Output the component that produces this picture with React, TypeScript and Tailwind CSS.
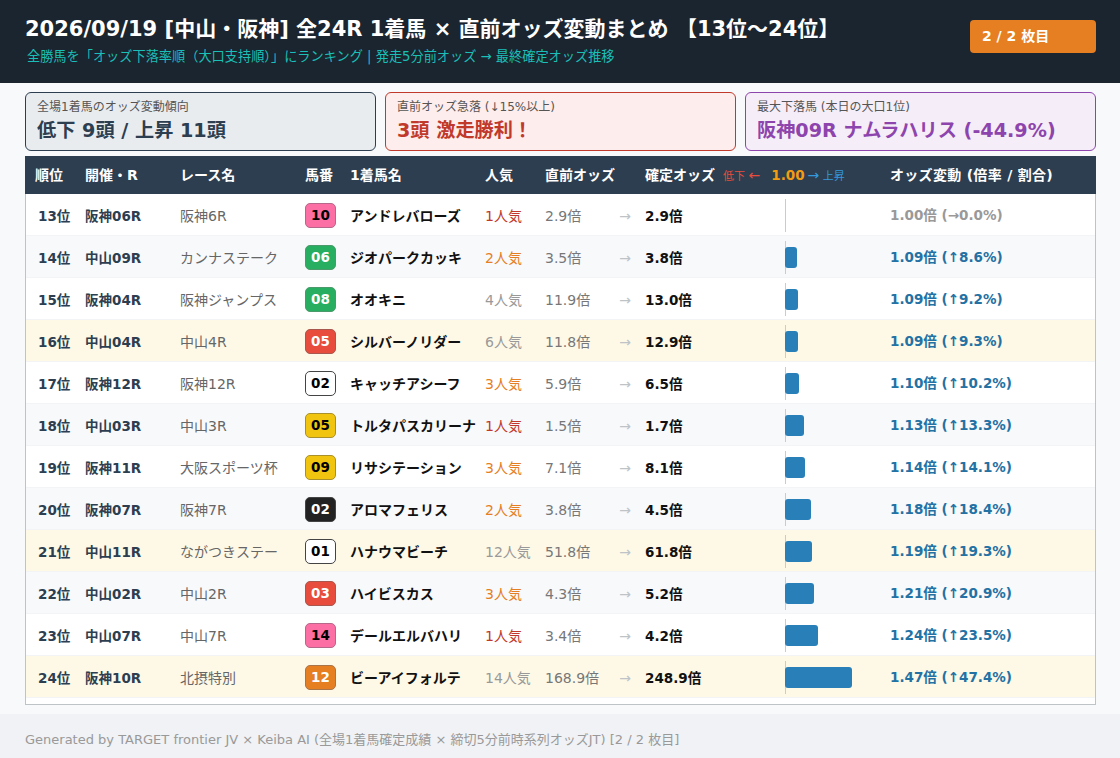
const rows = [
  { rank: "13位", r: "阪神06R", race: "阪神6R", no: "10", w: "p", name: "アンドレバローズ", pop: "1人気", before: "2.9倍", after: "2.9倍", pct: 0, label: "1.00倍 (→0.0%)" },
  { rank: "14位", r: "中山09R", race: "カンナステーク", no: "06", w: "g", name: "ジオパークカッキ", pop: "2人気", before: "3.5倍", after: "3.8倍", pct: 8.6, label: "1.09倍 (↑8.6%)" },
  { rank: "15位", r: "阪神04R", race: "阪神ジャンプス", no: "08", w: "g", name: "オオキニ", pop: "4人気", before: "11.9倍", after: "13.0倍", pct: 9.2, label: "1.09倍 (↑9.2%)" },
  { rank: "16位", r: "中山04R", race: "中山4R", no: "05", w: "r", name: "シルバーノリダー", pop: "6人気", before: "11.8倍", after: "12.9倍", pct: 9.3, label: "1.09倍 (↑9.3%)", hot: true },
  { rank: "17位", r: "阪神12R", race: "阪神12R", no: "02", w: "w", name: "キャッチアシーフ", pop: "3人気", before: "5.9倍", after: "6.5倍", pct: 10.2, label: "1.10倍 (↑10.2%)" },
  { rank: "18位", r: "中山03R", race: "中山3R", no: "05", w: "y", name: "トルタパスカリーナ", pop: "1人気", before: "1.5倍", after: "1.7倍", pct: 13.3, label: "1.13倍 (↑13.3%)" },
  { rank: "19位", r: "阪神11R", race: "大阪スポーツ杯", no: "09", w: "y", name: "リサシテーション", pop: "3人気", before: "7.1倍", after: "8.1倍", pct: 14.1, label: "1.14倍 (↑14.1%)" },
  { rank: "20位", r: "阪神07R", race: "阪神7R", no: "02", w: "b", name: "アロマフェリス", pop: "2人気", before: "3.8倍", after: "4.5倍", pct: 18.4, label: "1.18倍 (↑18.4%)" },
  { rank: "21位", r: "中山11R", race: "ながつきステー", no: "01", w: "w", name: "ハナウマビーチ", pop: "12人気", before: "51.8倍", after: "61.8倍", pct: 19.3, label: "1.19倍 (↑19.3%)", hot: true },
  { rank: "22位", r: "中山02R", race: "中山2R", no: "03", w: "r", name: "ハイビスカス", pop: "3人気", before: "4.3倍", after: "5.2倍", pct: 20.9, label: "1.21倍 (↑20.9%)" },
  { rank: "23位", r: "中山07R", race: "中山7R", no: "14", w: "p", name: "デールエルバハリ", pop: "1人気", before: "3.4倍", after: "4.2倍", pct: 23.5, label: "1.24倍 (↑23.5%)" },
  { rank: "24位", r: "阪神10R", race: "北摂特別", no: "12", w: "o", name: "ビーアイフォルテ", pop: "14人気", before: "168.9倍", after: "248.9倍", pct: 47.4, label: "1.47倍 (↑47.4%)", hot: true },
];

const wakuClass: Record<string, string> = {
  p: "bg-[#fb6fa5] text-black border-[#b5688a]",
  g: "bg-[#27ae60] text-white border-[#4c9a6c]",
  r: "bg-[#e74c3c] text-white border-[#a8584e]",
  w: "bg-white text-black border-[#444444]",
  y: "bg-[#f1c40f] text-black border-[#a8902c]",
  b: "bg-[#222222] text-white border-[#444444]",
  o: "bg-[#e67e22] text-white border-[#a8754a]",
};

const popClass = (pop: string) => {
  const n = parseInt(pop);
  if (n === 1) return "text-[#c0392b]";
  if (n <= 3) return "text-[#e67e22]";
  return "text-[#999999]";
};

const cols = "grid grid-cols-[50px_95px_125px_45px_135px_60px_100px_140px_105px_1fr] items-center";

export default function App() {
  return (
    <div className="w-[1120px] h-[758px] overflow-hidden bg-[#f8f9fb] flex flex-col font-['DejaVu_Sans','Noto_Sans_CJK_JP',sans-serif]">
      <header className="h-[83px] shrink-0 bg-[#1a252f] pl-[25px] pr-[24px] flex justify-between items-start">
        <div className="pt-[14px]">
          <h1 className="text-[21px] leading-[30px] font-bold text-white whitespace-nowrap">2026/09/19 [中山・阪神] 全24R 1着馬 × 直前オッズ変動まとめ 【13位～24位】</h1>
          <p className="text-[13.2px] leading-[18px] mt-[4px] pl-[2px] text-[#1abfb8] whitespace-nowrap">全勝馬を「オッズ下落率順（大口支持順）」にランキング | 発走5分前オッズ → 最終確定オッズ推移</p>
        </div>
        <div className="mt-[20px] w-[126px] h-[33px] rounded-[4px] bg-[#e67e22] text-white text-[14px] font-bold flex items-center pl-[12px]">2 / 2 枚目</div>
      </header>

      <main className="flex-1 pl-[25px] pr-[24px] pt-[9px]">
        <div className="grid grid-cols-3 gap-[9px]">
          <div className="h-[59px] rounded-[6px] border border-[#2c3e50] bg-[#e9ecef] pl-[11px] pt-[5px]">
            <div className="text-[12px] leading-[18px] text-[#555555]">全場1着馬のオッズ変動傾向</div>
            <div className="text-[19.2px] leading-[28px] mt-[1px] font-bold text-[#2c3e50]">低下 9頭 / 上昇 11頭</div>
          </div>
          <div className="h-[59px] rounded-[6px] border border-[#c0392b] bg-[#fdedec] pl-[11px] pt-[5px]">
            <div className="text-[12px] leading-[18px] text-[#555555]">直前オッズ急落 (↓15%以上)</div>
            <div className="text-[19.2px] leading-[28px] mt-[1px] font-bold text-[#c0392b]">3頭 激走勝利！</div>
          </div>
          <div className="h-[59px] rounded-[6px] border border-[#8e44ad] bg-[#f5eef8] pl-[11px] pt-[5px]">
            <div className="text-[12px] leading-[18px] text-[#555555]">最大下落馬 (本日の大口1位)</div>
            <div className="text-[19.2px] leading-[28px] mt-[1px] font-bold text-[#8e44ad]">阪神09R ナムラハリス (-44.9%)</div>
          </div>
        </div>

        <div className="mt-[5px] h-[549px] border border-t-0 border-[#bdc3c7] bg-white">
          <div className={`${cols} -mx-px h-[38px] pl-[10px] pt-[1px] bg-[#2c3e50] text-white text-[14px] font-bold whitespace-nowrap`}>
            <div>順位</div>
            <div>開催・R</div>
            <div>レース名</div>
            <div>馬番</div>
            <div>1着馬名</div>
            <div>人気</div>
            <div>直前オッズ</div>
            <div className="flex items-center">
              <span>確定オッズ</span>
              <span className="ml-[8px] text-[11px] font-normal text-[#e74c3c]">低下 <span className="text-[14px]">←</span></span>
              <span className="ml-[11px] text-[13.5px] text-[#f39c12]">1.00</span>
              <span className="ml-[3px] text-[11px] font-normal text-[#3498db]"><span className="text-[14px]">→</span> 上昇</span>
            </div>
            <div />
            <div className="tracking-[0.3px]">オッズ変動 (倍率 / 割合)</div>
          </div>
          {rows.map((row, i) => (
            <div
              key={row.rank}
              className={`${cols} h-[42px] pl-[9px] pt-[2px] text-[13.5px] border-b border-[#f3f4f6] whitespace-nowrap ${row.hot ? "bg-[#fef9e7]" : i % 2 === 1 ? "bg-[#f8f9fb]" : "bg-white"}`}
            >
              <div className="pl-[3px] pt-[2px] font-bold text-[#2c3e50]">{row.rank}</div>
              <div className="pt-[2px] font-bold text-[#2c3e50]">{row.r}</div>
              <div className="pt-[2px] text-[14px] text-[#666666]">{row.race}</div>
              <div>
                <div className={`w-[31px] h-[25px] rounded-[5px] border flex items-center justify-center text-[13.5px] font-bold ${wakuClass[row.w]}`}>{row.no}</div>
              </div>
              <div className="pt-[1px] text-[14px] font-bold text-[#111111]">{row.name}</div>
              <div className={`pt-[2px] text-[14px] ${popClass(row.pop)}`}>{row.pop}</div>
              <div className="pt-[2px] flex items-center justify-between pr-[14px] text-[14px] text-[#777777]">
                <span>{row.before}</span>
                <span className="text-[#bdc3c7]">→</span>
              </div>
              <div className="pt-[2px] font-bold text-[#111111]">{row.after}</div>
              <div className="h-[33px] border-l border-[#c8ccd0] flex items-center">
                {row.pct > 0 && <div className="-ml-px h-[21px] rounded-[3px] bg-[#2980b9]" style={{ width: row.pct * 1.41 }} />}
              </div>
              <div className={`font-bold ${row.pct > 0 ? "text-[#2471a3]" : "text-[#999999]"}`}>{row.label}</div>
            </div>
          ))}
        </div>
      </main>

      <footer className="h-[44px] shrink-0 bg-[#f0f2f5] pl-[25px] pt-[7px] flex items-center text-[13px] text-[#999999] whitespace-nowrap">
        Generated by TARGET frontier JV × Keiba AI (全場1着馬確定成績 × 締切5分前時系列オッズJT) [2 / 2 枚目]
      </footer>
    </div>
  );
}
